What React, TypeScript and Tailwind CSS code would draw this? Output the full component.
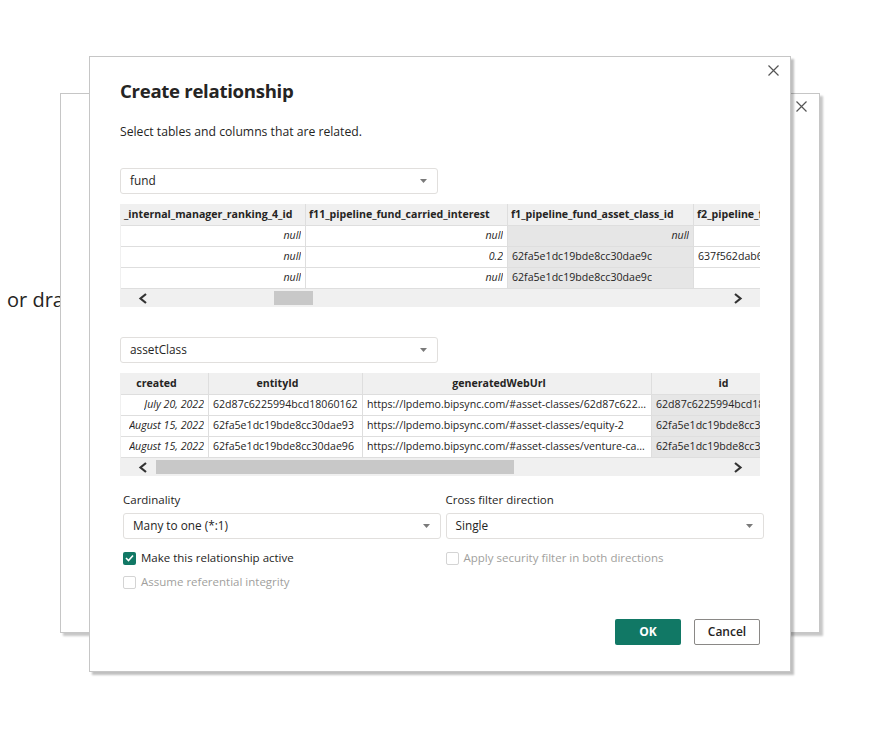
import React from 'react';

const font = { fontFamily: '"Open Sans", "Noto Sans", sans-serif' };

const CloseIcon = () => (
    <svg width="11" height="11" viewBox="0 0 11 11">
        <path d="M0.5 0.5 L10.5 10.5 M10.5 0.5 L0.5 10.5" stroke="#555" strokeWidth="1.2" />
    </svg>
);

const Caret = () => (
    <svg width="7" height="4" viewBox="0 0 7 4">
        <path d="M0 0 H7 L3.5 4 Z" fill="#7a7a7a" />
    </svg>
);

const Chevron = ({ dir }: { dir: 'left' | 'right' }) => (
    <svg width="10" height="11" viewBox="0 0 10 11">
        {dir === 'left' ? (
            <path d="M8 1 L2.5 5.5 L8 10" stroke="#333" strokeWidth="2.2" fill="none" />
        ) : (
            <path d="M2 1 L7.5 5.5 L2 10" stroke="#333" strokeWidth="2.2" fill="none" />
        )}
    </svg>
);

const Select = ({ value, className }: { value: string; className: string }) => (
    <div className={`flex items-center justify-between h-[26px] border border-[#e1dfdd] rounded-[3px] pl-[9px] pr-[10px] text-[11.8px] text-[#252423] bg-white ${className}`}>
        <span>{value}</span>
        <Caret />
    </div>
);

type Cell = { text: string; italic?: boolean; right?: boolean };

const Scrollbar = ({ thumbLeft, thumbWidth }: { thumbLeft: string; thumbWidth: string }) => (
    <div className="flex items-center h-[18px] w-[640px] bg-[#f0f0f0]">
        <div className="w-[35px] flex justify-center pl-[9px]">
            <Chevron dir="left" />
        </div>
        <div className="flex-1 flex items-center">
            <div className={`h-[14px] bg-[#c8c8c8] ${thumbLeft} ${thumbWidth}`} />
        </div>
        <div className="w-[35px] flex justify-center pr-[11px]">
            <Chevron dir="right" />
        </div>
    </div>
);

const Table = ({
    widths,
    headers,
    rows,
    selected,
    centerHeaders,
    thumbLeft,
    thumbWidth,
}: {
    widths: string[];
    headers: string[];
    rows: Cell[][];
    selected: number;
    centerHeaders?: boolean;
    thumbLeft: string;
    thumbWidth: string;
}) => (
    <div className="w-[640px] overflow-hidden border-l border-[#f0f0f0]">
        <div className="flex h-[22px] bg-[#f0f0f0] border-b border-[#dedede]">
            {headers.map((h, i) => (
                <div
                    key={i}
                    className={`${widths[i]} shrink-0 flex items-center overflow-hidden whitespace-nowrap border-r border-[#dedede] text-[10.6px] font-bold text-[#252423] ${centerHeaders ? 'justify-center pr-[16px]' : 'pl-[3px]'} ${i === 0 && !centerHeaders ? 'pl-0' : ''}`}
                >
                    {h}
                </div>
            ))}
        </div>
        {rows.map((r, ri) => (
            <div key={ri} className="flex h-[21px] border-b border-[#dedede]">
                {r.map((c, ci) => (
                    <div
                        key={ci}
                        className={`${widths[ci]} shrink-0 flex items-center overflow-hidden whitespace-nowrap border-r border-[#dedede] text-[10.6px] text-[#252423] px-[4px] ${c.right ? 'justify-end' : ''} ${c.italic ? 'italic' : ''} ${ci === selected ? 'bg-[#e6e6e6]' : 'bg-white'}`}
                    >
                        <span className="overflow-hidden text-ellipsis">{c.text}</span>
                    </div>
                ))}
            </div>
        ))}
        <Scrollbar thumbLeft={thumbLeft} thumbWidth={thumbWidth} />
    </div>
);

const Checkbox = ({ checked, disabled, label }: { checked?: boolean; disabled?: boolean; label: string }) => (
    <label className="flex items-center gap-[5px] h-[18px]">
        {checked ? (
            <span className="w-[13px] h-[13px] rounded-[2px] bg-[#117865] flex items-center justify-center">
                <svg width="9" height="8" viewBox="0 0 9 8">
                    <path d="M1 4 L3.5 6.5 L8 1.5" stroke="#fff" strokeWidth="1.6" fill="none" />
                </svg>
            </span>
        ) : (
            <span className="w-[13px] h-[13px] rounded-[2px] border border-[#d4d4d4] bg-white" />
        )}
        <span className={`text-[11.5px] ${disabled ? 'text-[#a19f9d]' : 'text-[#252423]'}`}>{label}</span>
    </label>
);

const fundRows: Cell[][] = [
    [
        { text: 'null', italic: true, right: true },
        { text: 'null', italic: true, right: true },
        { text: 'null', italic: true, right: true },
        { text: '' },
    ],
    [
        { text: 'null', italic: true, right: true },
        { text: '0.2', italic: true, right: true },
        { text: '62fa5e1dc19bde8cc30dae9c' },
        { text: '637f562dab6c1d' },
    ],
    [
        { text: 'null', italic: true, right: true },
        { text: 'null', italic: true, right: true },
        { text: '62fa5e1dc19bde8cc30dae9c' },
        { text: '' },
    ],
];

const assetRows: Cell[][] = [
    [
        { text: 'July 20, 2022', italic: true, right: true },
        { text: '62d87c6225994bcd18060162' },
        { text: 'https://lpdemo.bipsync.com/#asset-classes/62d87c622...' },
        { text: '62d87c6225994bcd18060162' },
    ],
    [
        { text: 'August 15, 2022', italic: true, right: true },
        { text: '62fa5e1dc19bde8cc30dae93' },
        { text: 'https://lpdemo.bipsync.com/#asset-classes/equity-2' },
        { text: '62fa5e1dc19bde8cc30dae93' },
    ],
    [
        { text: 'August 15, 2022', italic: true, right: true },
        { text: '62fa5e1dc19bde8cc30dae96' },
        { text: 'https://lpdemo.bipsync.com/#asset-classes/venture-ca...' },
        { text: '62fa5e1dc19bde8cc30dae96' },
    ],
];

export default function App() {
    return (
        <div className="relative w-[885px] h-[731px] bg-white overflow-hidden" style={font}>
            {/* page text under the dialogs */}
            <div className="absolute left-[7px] top-[285px] text-[20px] text-[#252423]">or drag data here</div>

            {/* dialog behind */}
            <div className="absolute left-[60px] top-[93px] w-[760px] h-[540px] bg-white border border-[#c6c6c6] shadow-[3px_3px_2px_rgba(0,0,0,0.22)]">
                <div className="flex justify-end pt-[7px] pr-[12px]">
                    <CloseIcon />
                </div>
            </div>

            {/* Create relationship dialog */}
            <div className="absolute left-[89px] top-[56px] w-[702px] h-[616px] bg-white border border-[#c6c6c6] shadow-[3px_3px_2px_rgba(0,0,0,0.25)]">
                <div className="flex justify-end pt-[8px] pr-[11px] h-[20px]">
                    <CloseIcon />
                </div>
                <div className="pl-[30px] flex flex-col">
                    <h1 className="text-[18.6px] font-bold text-[#252423] leading-[28px] tracking-[-0.3px]">Create relationship</h1>
                    <p className="mt-[17px] text-[12.2px] text-[#252423] leading-[20px]">Select tables and columns that are related.</p>

                    <Select value="fund" className="mt-[26px] w-[318px]" />
                    <div className="mt-[10px]">
                        <Table
                            widths={['w-[185px]', 'w-[202px]', 'w-[186px]', 'w-[220px]']}
                            headers={['_internal_manager_ranking_4_id', 'f11_pipeline_fund_carried_interest', 'f1_pipeline_fund_asset_class_id', 'f2_pipeline_fund_id']}
                            rows={fundRows}
                            selected={2}
                            thumbLeft="ml-[118px]"
                            thumbWidth="w-[39px]"
                        />
                    </div>

                    <Select value="assetClass" className="mt-[30px] w-[318px]" />
                    <div className="mt-[10px]">
                        <Table
                            widths={['w-[88px]', 'w-[154px]', 'w-[289px]', 'w-[160px]']}
                            headers={['created', 'entityId', 'generatedWebUrl', 'id']}
                            rows={assetRows}
                            selected={3}
                            centerHeaders
                            thumbLeft="ml-0"
                            thumbWidth="w-[358px]"
                        />
                    </div>

                    <div className="ml-[3px] w-[640px] mt-[15px] grid grid-cols-2 gap-x-[5px]">
                        <div className="flex flex-col">
                            <span className="text-[11.5px] text-[#252423] leading-[18px]">Cardinality</span>
                            <Select value="Many to one (*:1)" className="mt-[4px] w-[318px]" />
                            <div className="mt-[10px] flex flex-col gap-[6px]">
                                <Checkbox checked label="Make this relationship active" />
                                <Checkbox disabled label="Assume referential integrity" />
                            </div>
                        </div>
                        <div className="flex flex-col">
                            <span className="text-[11.5px] text-[#252423] leading-[18px]">Cross filter direction</span>
                            <Select value="Single" className="mt-[4px] w-[318px]" />
                            <div className="mt-[10px] flex flex-col">
                                <Checkbox disabled label="Apply security filter in both directions" />
                            </div>
                        </div>
                    </div>

                    <div className="w-[640px] flex justify-end gap-[13px] mt-[28px]">
                        <button className="w-[66px] h-[26px] rounded-[2px] bg-[#117865] text-white text-[12px] font-bold">OK</button>
                        <button className="w-[66px] h-[26px] rounded-[2px] bg-white border border-[#8a8886] text-[#252423] text-[12px] font-semibold">Cancel</button>
                    </div>
                </div>
            </div>
        </div>
    );
}
